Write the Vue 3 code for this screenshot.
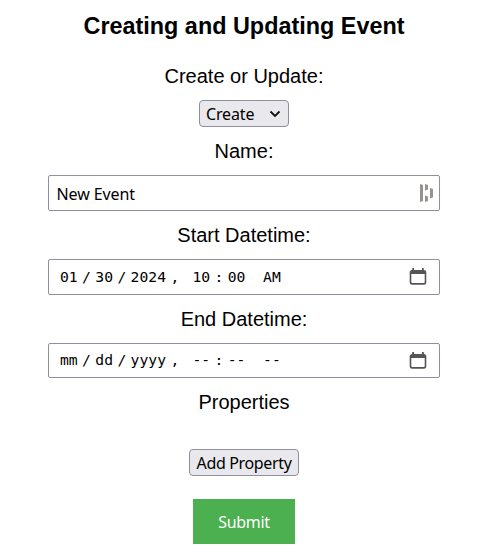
<script setup>
const dates = [
  { id: 'start', label: 'Start Datetime:', parts: ['01', '/', '30', '/', '2024', ', ', '10', ':', '00', ' ', 'AM'] },
  { id: 'end', label: 'End Datetime:', parts: ['mm', '/', 'dd', '/', 'yyyy', ', ', '--', ':', '--', ' ', '--'] }
]
const isField = (i) => i % 2 === 0
</script>

<template>
  <form class="event-form" @submit.prevent>
    <h2 class="title">Creating and Updating Event</h2>

    <div class="label">Create or Update:</div>
    <button type="button" class="select">
      <span class="select-text">Create</span>
      <svg class="chevron" width="12" height="8" viewBox="0 0 12 8">
        <path d="M1.5 1.5 L6 6 L10.5 1.5" fill="none" stroke="#111" stroke-width="1.8" />
      </svg>
    </button>

    <div class="label name-label">Name:</div>
    <div class="box name-box">
      <span class="name-text">New Event</span>
      <svg class="manager" width="14" height="20" viewBox="0 0 14 20">
        <g fill="#96928f">
          <path d="M1 1 L4 2 V18 L1 19 Z" />
          <path d="M6 1 L9 2 V6.5 L6 7.5 Z" />
          <path d="M6 12.5 L9 13.5 V18 L6 19 Z" />
          <path d="M11 5 L14 6 V14.5 L11 15.5 Z" />
        </g>
      </svg>
    </div>

    <template v-for="d in dates" :key="d.id">
      <div class="label date-label">{{ d.label }}</div>
      <div class="box date-box" :class="d.id">
        <div class="date-parts">
          <span v-for="(p, i) in d.parts" :key="i" :class="{ field: isField(i) }">{{ p }}</span>
        </div>
        <svg class="calendar" width="18" height="18" viewBox="0 0 18 18">
          <path
            fill="#555"
            fill-rule="evenodd"
            d="M3.2 0h1.8V2h8V0h1.8V2a2.5 2.5 0 0 1 2.5 2.5v9.8a2.5 2.5 0 0 1-2.5 2.5h-11.6a2.5 2.5 0 0 1-2.5-2.5v-9.8A2.5 2.5 0 0 1 3.2 2Z M2.3 6v8.1a1 1 0 0 0 1 1h11.4a1 1 0 0 0 1-1V6Z"
          />
        </svg>
      </div>
    </template>

    <div class="label properties">Properties</div>
    <button type="button" class="add">Add Property</button>
    <button type="submit" class="submit">Submit</button>
  </form>
</template>

<style>
body {
  background: #fff;
}
</style>

<style scoped>
.event-form {
  display: flex;
  flex-direction: column;
  align-items: center;
  width: 392px;
  margin-left: 48px;
  padding-top: 12px;
  font-family: "Liberation Sans", Arial, sans-serif;
  color: #000;
}
.title {
  margin: 0 0 22px;
  font-size: 23.4px;
  line-height: 28px;
  font-weight: 700;
  white-space: nowrap;
}
.label {
  font-size: 20px;
  line-height: 28px;
  white-space: nowrap;
}
button {
  box-sizing: border-box;
  margin: 0;
  padding: 0;
  font-family: "Noto Sans", sans-serif;
  font-size: 16px;
  color: #000;
  white-space: nowrap;
}
.select {
  display: flex;
  align-items: center;
  justify-content: space-between;
  width: 90px;
  height: 27px;
  margin-top: 10px;
  padding: 0 7px 0 6px;
  border: 1px solid #8f8f9d;
  border-radius: 4px;
  background: #e9e9ed;
}
.select-text {
  padding-top: 2px;
  line-height: 25px;
  letter-spacing: -0.15px;
}
.name-label {
  margin-top: 10px;
}
.box {
  box-sizing: border-box;
  display: flex;
  align-items: center;
  justify-content: space-between;
  width: 392px;
  height: 36px;
  border: 1px solid #8f8f9d;
  border-radius: 2px;
  background: #fff;
}
.name-box {
  margin-top: 10px;
  padding: 0 6px 0 7.5px;
}
.name-text {
  padding-top: 2px;
  font-family: "Noto Sans", sans-serif;
  font-size: 16px;
  line-height: 32px;
  letter-spacing: -0.1px;
}
.date-label {
  margin-top: 10px;
}
.date-box {
  margin-top: 10px;
  padding: 0 12px 0 6.6px;
}
.end {
  height: 35px;
}
.date-parts {
  display: flex;
  padding-bottom: 1px;
  white-space: pre;
  font-family: "DejaVu Sans Mono", monospace;
  font-size: 14.7px;
  line-height: 32px;
}
.field {
  padding: 0 4.4px;
}
.properties {
  margin-top: 10px;
}
.add {
  width: 110px;
  height: 27px;
  margin-top: 33px;
  padding-top: 2px;
  border: 1px solid #8f8f9d;
  border-radius: 4px;
  background: #e9e9ed;
  line-height: 23px;
  letter-spacing: -0.35px;
}
.submit {
  width: 102px;
  height: 45px;
  margin-top: 23px;
  padding-top: 2px;
  border: 0;
  background: #4caf50;
  color: #fff;
  line-height: 43px;
  letter-spacing: -0.3px;
}
</style>
